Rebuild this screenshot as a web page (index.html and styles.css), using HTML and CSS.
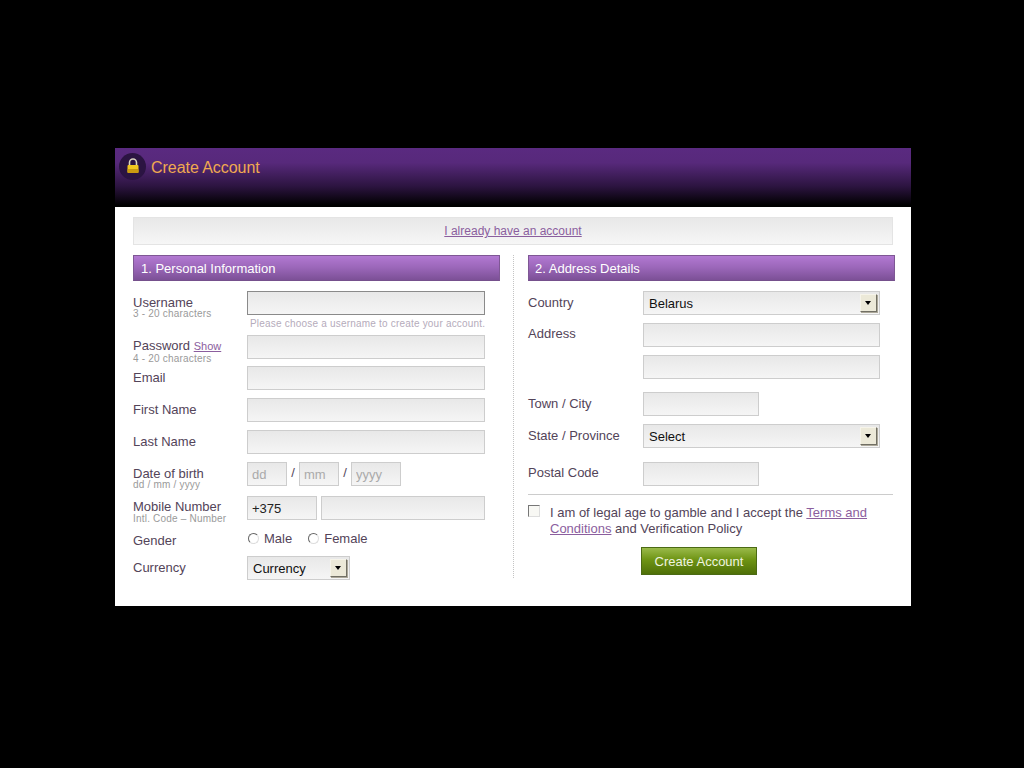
FILE: index.html
```html
<!DOCTYPE html>
<html lang="en">
<head>
<meta charset="utf-8">
<title>Create Account</title>
<link rel="stylesheet" href="styles.css">
</head>
<body>
<main class="window">
  <header class="head">
    <span class="lock">
      <svg width="14" height="16" viewBox="0 0 14 16"><path d="M3.5 8V4.5a3.5 3.5 0 0 1 7 0V8" fill="none" stroke="#d9d4c0" stroke-width="1.6"/><rect x="1.5" y="7" width="11" height="8" rx="1" fill="#f2c81e"/><rect x="1.5" y="11" width="11" height="4" rx="1" fill="#c99a10"/></svg>
    </span>
    <h1 class="title">Create Account</h1>
  </header>
  <div class="content">
    <div class="notice"><a href="#" class="link">I already have an account</a></div>
    <div class="cols">
      <section class="col col-left">
        <h2 class="bar">1. Personal Information</h2>
        <div class="rows">
          <div class="row h44">
            <div class="label"><span class="name">Username</span><small class="sub">3 - 20 characters</small></div>
            <div class="field"><input class="input wide active" type="text"><p class="tip">Please choose a username to create your account.</p></div>
          </div>
          <div class="row h31">
            <div class="label up"><span class="name">Password <a href="#" class="link show">Show</a></span><small class="sub low">4 - 20 characters</small></div>
            <div class="field"><input class="input wide" type="password"></div>
          </div>
          <div class="row"><div class="label"><span class="name">Email</span></div><div class="field"><input class="input wide" type="text"></div></div>
          <div class="row"><div class="label"><span class="name">First Name</span></div><div class="field"><input class="input wide" type="text"></div></div>
          <div class="row"><div class="label"><span class="name">Last Name</span></div><div class="field"><input class="input wide" type="text"></div></div>
          <div class="row h34">
            <div class="label"><span class="name">Date of birth</span><small class="sub">dd / mm / yyyy</small></div>
            <div class="field inline">
              <input class="input dd" type="text" placeholder="dd"><span class="slash">/</span>
              <input class="input dd" type="text" placeholder="mm"><span class="slash">/</span>
              <input class="input yyyy" type="text" placeholder="yyyy">
            </div>
          </div>
          <div class="row h35">
            <div class="label tight"><span class="name">Mobile Number</span><small class="sub even">Intl. Code – Number</small></div>
            <div class="field phone"><input class="input code" type="text" value="+375"><input class="input number" type="text"></div>
          </div>
          <div class="row h25">
            <div class="label tight"><span class="name">Gender</span></div>
            <div class="field radios">
              <label class="choice"><input class="radio" type="radio" name="g">Male</label>
              <label class="choice"><input class="radio" type="radio" name="g">Female</label>
            </div>
          </div>
          <div class="row h24">
            <div class="label"><span class="name">Currency</span></div>
            <div class="field"><div class="select small"><span>Currency</span><i class="arrow"></i></div></div>
          </div>
        </div>
      </section>
      <section class="col col-right">
        <h2 class="bar">2. Address Details</h2>
        <div class="rows">
          <div class="rrow h32"><div class="rlabel"><span class="name">Country</span></div><div class="select full"><span>Belarus</span><i class="arrow"></i></div></div>
          <div class="rrow h32"><div class="rlabel tight"><span class="name">Address</span></div><input class="input full" type="text"></div>
          <div class="rrow h37"><div class="rlabel"></div><input class="input full" type="text"></div>
          <div class="rrow h32"><div class="rlabel"><span class="name">Town / City</span></div><input class="input half" type="text"></div>
          <div class="rrow h38"><div class="rlabel"><span class="name">State / Province</span></div><div class="select full"><span>Select</span><i class="arrow"></i></div></div>
          <div class="rrow h32"><div class="rlabel tight"><span class="name">Postal Code</span></div><input class="input half" type="text"></div>
          <hr class="rule">
          <label class="terms"><input class="check" type="checkbox"><span>I am of legal age to gamble and I accept the <a href="#" class="link">Terms and Conditions</a> and Verification Policy</span></label>
          <div class="actions"><button class="btn" type="button">Create Account</button></div>
        </div>
      </section>
    </div>
  </div>
</main>
</body>
</html>
```
FILE: styles.css
```css
* { box-sizing: border-box; }
html, body { height: 100%; }
body {
  margin: 0;
  background: #000;
  font-family: "Liberation Sans", Arial, sans-serif;
  font-size: 13px;
  color: #534459;
  padding: 148px 113px 0 115px;
}
.window { width: 796px; height: 458px; background: #fff; }
.head {
  height: 59px;
  display: flex;
  align-items: flex-start;
  padding: 5px 0 0 4px;
  background: linear-gradient(#5a2a80 0, #57297b 25%, #2c1440 65%, #000 97%);
}
.lock {
  width: 27px; height: 27px;
  border-radius: 50%;
  background: #2b1442;
  display: flex; align-items: center; justify-content: center;
  padding-bottom: 1px;
}
.title { margin: 5px 0 0 5px; font-size: 16px; line-height: 20px; font-weight: normal; color: #f0aa50; letter-spacing: -.05px; }
.content { padding: 10px 16px 0 18px; }
.notice {
  width: 760px; height: 28px;
  background: linear-gradient(#e8e8e8, #f6f6f6);
  border: 1px solid #e4e4e4;
  text-align: center;
  font-size: 12px; line-height: 26px;
}
.link { color: #8b5e9e; }
.cols { display: flex; margin-top: 10px; }
.col-left { width: 381px; height: 323px; border-right: 1px dotted #c4c4c4; }
.col-right { margin-left: 14px; width: 367px; }
.bar {
  margin: 0; width: 367px; height: 26px;
  padding-left: 7px;
  font-size: 13px; line-height: 26px; font-weight: normal; color: #fff;
  background: linear-gradient(#b279d2, #9a66b8 50%, #7c5096);
  border: 1px solid #7e5794;
  border-bottom-color: #75508c;
}
.col-right .bar { padding-left: 6px; }
.rows { margin-top: 10px; }
.row { display: flex; height: 32px; }
.h44 { height: 44px; } .h31 { height: 31px; } .h34 { height: 34px; }
.h35 { height: 34px; } .h25 { height: 26px; } .h24 { height: 24px; }
.label { width: 114px; flex: none; padding-top: 5px; }
.rlabel { width: 115px; flex: none; padding-top: 5px; }
.up { padding-top: 4px; }
.tight { padding-top: 4px; }
.name { display: block; font-size: 13px; line-height: 14px; white-space: nowrap; }
.sub { display: block; margin-top: -1px; font-size: 10px; line-height: 9px; color: #9a9a9a; white-space: nowrap; letter-spacing: .2px; }
.even { margin-top: 0; }
.low { margin-top: 1px; }
.show { font-size: 11px; }
.field { flex: 1; }
.input {
  display: block;
  height: 24px; padding: 0 5px; margin: 0;
  border: 1px solid #cdcdcd; border-radius: 0;
  background: linear-gradient(#e8e8e8, #f5f5f5);
  font: 13px "Liberation Sans", Arial, sans-serif;
  color: #222;
  outline: none;
}
.input::placeholder { color: #aaa; opacity: 1; }
.wide { width: 238px; }
.active { border-color: #8a8a8a; }
.tip { margin: 3px 0 0 3px; font-size: 10px; line-height: 11px; color: #b5abbb; letter-spacing: .2px; white-space: nowrap; }
.inline { display: flex; }
.dd { width: 40px; padding: 0 4px; }
.yyyy { width: 50px; padding: 0 4px; }
.slash { width: 12px; text-align: center; line-height: 22px; }
.phone { display: flex; gap: 4px; }
.code { width: 70px; padding: 0 4px; }
.number { width: 164px; }
.radios { display: flex; gap: 15px; }
.choice { display: flex; align-items: center; height: 16px; }
.radio {
  appearance: none; width: 11px; height: 11px; margin: 0 5px 0 1px;
  border-radius: 50%; border: 1px solid;
  border-color: #666 #ddd #ddd #666; background: #fff;
}
.select {
  height: 24px; display: flex; align-items: center; justify-content: space-between;
  border: 1px solid #cdcdcd;
  background: linear-gradient(#e8e8e8, #f5f5f5);
  padding: 0 2px 0 5px;
  font-size: 13px; color: #111;
}
.small { width: 103px; }
.arrow {
  position: relative;
  width: 17px; height: 18px;
  background: #ece9d8;
  border: 1px solid; border-color: #f6f4ea #716f64 #716f64 #f6f4ea;
  box-shadow: 1px 1px 0 #aca899;
}
.arrow::after {
  content: ""; position: absolute; left: 4px; top: 6px;
  border: 3.5px solid transparent; border-top: 4px solid #000; border-bottom: 0;
}
.rrow { display: flex; height: 32px; }
.h37 { height: 37px; } .h38 { height: 38px; }
.full { width: 237px; }
.half { width: 116px; }
.rule { width: 365px; margin: 0; border: 0; border-top: 1px solid #ccc; }
.terms { display: flex; margin-top: 10px; line-height: 16px; font-size: 13px; width: 365px; }
.check {
  appearance: none; flex: none; width: 12px; height: 12px; margin: 0 10px 0 0;
  border: 1px solid; border-color: #777 #ddd #ddd #777; background: #f8f8f4;
}
.actions { margin-top: 10px; padding-left: 113px; }
.btn {
  display: block; width: 116px; height: 28px; padding: 0;
  border: 1px solid #4b6a14;
  background: linear-gradient(#9aba4a, #6e9414 45%, #4f7008);
  color: #f0f4e0;
  font: 13px "Liberation Sans", Arial, sans-serif;
}
```
